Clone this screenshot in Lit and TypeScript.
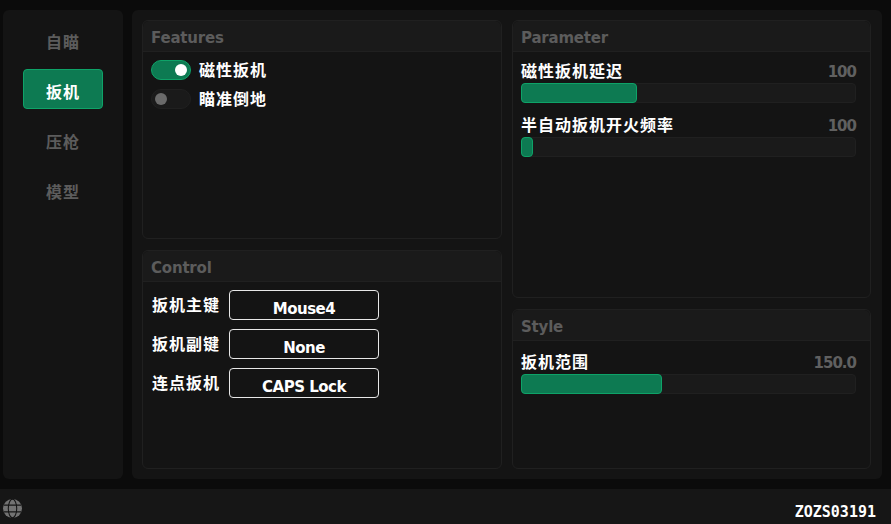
import { LitElement, css, html } from "lit";
import { customElement } from "lit/decorators.js";

const navItems = ["自瞄", "扳机", "压枪", "模型"];
const keyBinds = [
    { label: "扳机主键", key: "Mouse4" },
    { label: "扳机副键", key: "None" },
    { label: "连点扳机", key: "CAPS Lock" },
];

@customElement("app-root")
export class AppRoot extends LitElement {
    slider(label: string, value: string, fill: number) {
        return html`
            <div class="slider">
                <div class="slider-head">
                    <span class="slider-label">${label}</span>
                    <span class="slider-value">${value}</span>
                </div>
                <div class="track"><div class="fill" style="width:${fill}px"></div></div>
            </div>
        `;
    }

    toggle(label: string, on: boolean) {
        return html`
            <div class="toggle-row">
                <div class="toggle ${on ? "on" : ""}"><div class="knob"></div></div>
                <span class="toggle-label">${label}</span>
            </div>
        `;
    }

    render() {
        return html`
            <div class="top">
                <nav class="sidebar">
                    ${navItems.map((n, i) => html`<div class="nav ${i === 1 ? "active" : ""}"><span>${n}</span></div>`)}
                </nav>
                <main class="content">
                    <div class="col left">
                        <section class="panel features">
                            <header>Features</header>
                            <div class="toggles">${this.toggle("磁性扳机", true)}${this.toggle("瞄准倒地", false)}</div>
                        </section>
                        <section class="panel control">
                            <header>Control</header>
                            <div class="binds">
                                ${keyBinds.map(
                                    (b) => html`
                                        <div class="bind">
                                            <span class="bind-label">${b.label}</span>
                                            <div class="key"><span>${b.key}</span></div>
                                        </div>
                                    `,
                                )}
                            </div>
                        </section>
                    </div>
                    <div class="col right">
                        <section class="panel parameter">
                            <header>Parameter</header>
                            <div class="sliders">
                                ${this.slider("磁性扳机延迟", "100", 116)} ${this.slider("半自动扳机开火频率", "100", 12)}
                            </div>
                        </section>
                        <section class="panel style">
                            <header>Style</header>
                            <div class="sliders style-sliders">${this.slider("扳机范围", "150.0", 141)}</div>
                        </section>
                    </div>
                </main>
            </div>
            <footer>
                <svg class="globe" viewBox="0 0 18 18" width="19" height="19">
                    <circle cx="9" cy="9" r="9" fill="#737373"></circle>
                    <g fill="none" stroke="#161616" stroke-width="1">
                        <ellipse cx="9" cy="9" rx="4" ry="8.8"></ellipse>
                        <path d="M0.6 5.8H17.4M0.6 12.2H17.4"></path>
                    </g>
                </svg>
                <span class="serial">ZOZS03191</span>
            </footer>
        `;
    }

    static styles = css`
        :host {
            display: flex;
            flex-direction: column;
            width: 891px;
            height: 524px;
            background: #0b0b0b;
            font-family: "DejaVu Sans", "Noto Sans CJK SC", sans-serif;
            font-weight: 700;
            color: #fff;
            overflow: hidden;
        }

        .top {
            flex: 1;
            display: flex;
            gap: 9px;
            padding: 10px 9px 10px 3px;
            min-height: 0;
        }

        .sidebar {
            width: 120px;
            background: #141414;
            border-radius: 6px;
            display: flex;
            flex-direction: column;
            align-items: center;
            gap: 10px;
            padding-top: 9px;
            box-sizing: border-box;
        }

        .nav {
            width: 80px;
            height: 40px;
            box-sizing: border-box;
            display: flex;
            align-items: center;
            justify-content: center;
            padding-top: 3px;
            font-size: 16px;
            letter-spacing: 1px;
            color: #5c5c5c;
            border-radius: 4px;
            border: 1px solid transparent;
        }

        .nav.active {
            background: #0d7a52;
            border-color: #0ea368;
            color: #fff;
        }

        .content {
            flex: 1;
            background: #141414;
            border-radius: 6px;
            display: flex;
            gap: 10px;
            padding: 10px 11px 10px 10px;
        }

        .col {
            display: flex;
            flex-direction: column;
            gap: 11px;
            min-width: 0;
        }

        .left {
            width: 360px;
        }

        .right {
            width: 359px;
        }

        .panel {
            box-sizing: border-box;
            background: #141414;
            border: 1px solid #202020;
            border-radius: 6px;
            display: flex;
            flex-direction: column;
        }

        .features {
            height: 219px;
        }
        .control {
            flex: 1;
        }
        .parameter {
            height: 278px;
        }
        .style {
            flex: 1;
        }

        header {
            height: 31px;
            flex: none;
            box-sizing: border-box;
            padding: 7px 8px 0;
            background: #1a1a1a;
            border-bottom: 1px solid #202020;
            border-radius: 6px 6px 0 0;
            font-size: 15px;
            letter-spacing: -0.2px;
            line-height: 20px;
            color: #5c5c5c;
        }

        .toggles {
            display: flex;
            flex-direction: column;
            gap: 9px;
            padding: 8px 8px 0;
        }

        .toggle-row {
            display: flex;
            align-items: center;
            gap: 8px;
            height: 20px;
        }

        .toggle {
            width: 40px;
            height: 20px;
            box-sizing: border-box;
            border-radius: 10px;
            background: #1a1a1a;
            border: 1px solid #202020;
            display: flex;
            align-items: center;
            padding: 0 3px;
        }

        .toggle.on {
            background: #0d7a52;
            border-color: #0ea368;
            justify-content: flex-end;
        }

        .knob {
            width: 12px;
            height: 12px;
            border-radius: 50%;
            background: #6a6a6a;
        }

        .on .knob {
            background: #fff;
        }

        .toggle-label,
        .bind-label,
        .slider-label {
            font-size: 16px;
            line-height: 20px;
            letter-spacing: 1px;
        }

        .toggle-label {
            padding-top: 2px;
        }

        .binds {
            display: flex;
            flex-direction: column;
            gap: 9px;
            padding: 8px 9px 0;
        }

        .bind {
            display: flex;
            align-items: center;
            gap: 9px;
        }

        .bind-label {
            padding-top: 2px;
        }

        .key {
            width: 150px;
            height: 30px;
            box-sizing: border-box;
            border: 1px solid #e8e8e8;
            border-radius: 4px;
            display: flex;
            align-items: center;
            justify-content: center;
            padding-top: 7px;
            font-size: 15px;
            letter-spacing: -0.5px;
        }

        .sliders {
            display: flex;
            flex-direction: column;
            gap: 11px;
            padding: 8px 14px 0 8px;
        }

        .style-sliders {
            padding-top: 10px;
        }

        .slider-head {
            display: flex;
            justify-content: space-between;
            align-items: center;
            height: 22px;
            margin-bottom: 1px;
            padding-top: 2px;
            box-sizing: border-box;
        }

        .slider-value {
            font-size: 15px;
            letter-spacing: -1px;
            color: #606060;
        }

        .track {
            height: 20px;
            box-sizing: border-box;
            background: #1a1a1a;
            border: 1px solid #202020;
            border-radius: 4px;
        }

        .fill {
            height: 20px;
            margin: -1px;
            box-sizing: border-box;
            background: #0d7a52;
            border: 1px solid #0ea368;
            border-radius: 4px;
        }

        footer {
            height: 35px;
            flex: none;
            box-sizing: border-box;
            background: #161616;
            display: flex;
            align-items: center;
            justify-content: space-between;
            padding: 4px 15px 0 3px;
        }

        .serial {
            font-family: "DejaVu Sans Mono", monospace;
            font-size: 15px;
            padding-top: 7px;
            line-height: 20px;
        }
    `;
}
